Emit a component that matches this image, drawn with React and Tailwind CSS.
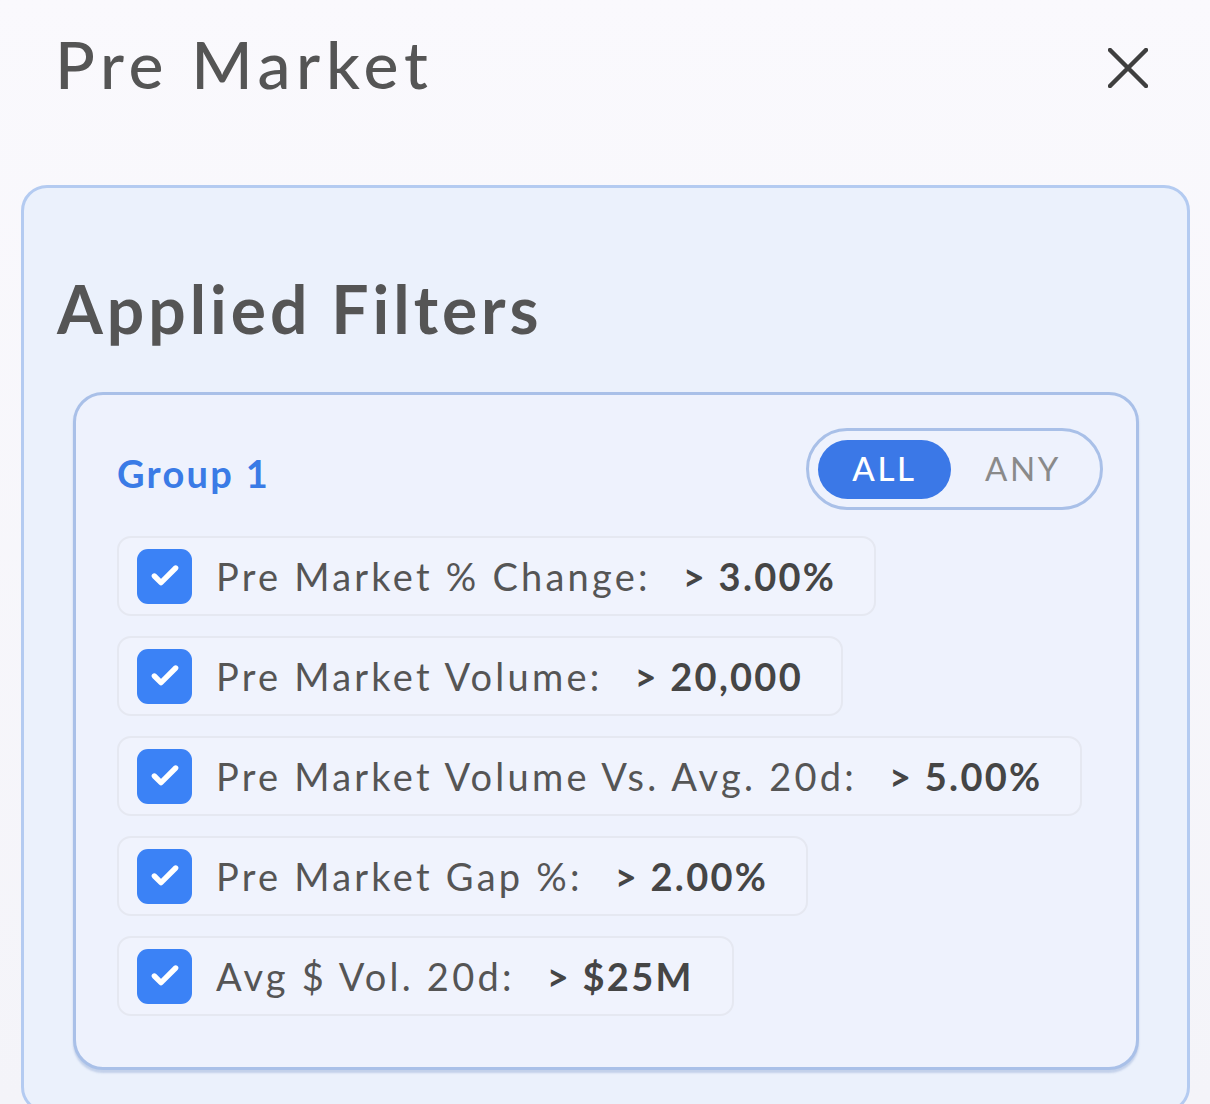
import { Check } from "lucide-react";

const filters = [
    { label: "Pre Market % Change:", value: "> 3.00%" },
    { label: "Pre Market Volume:", value: "> 20,000" },
    { label: "Pre Market Volume Vs. Avg. 20d:", value: "> 5.00%" },
    { label: "Pre Market Gap %:", value: "> 2.00%" },
    { label: "Avg $ Vol. 20d:", value: "> $25M" },
];

function FilterRow({ label, value }) {
    return (
        <div className="flex items-center h-[80px] pl-[18px] pr-[38px] rounded-[14px] border-2 border-[#e5e8f1] bg-[#f0f3fd] self-start">
            <span className="w-[55px] h-[55px] rounded-[11px] bg-[#3b82f6] flex items-center justify-center shrink-0">
                <Check size={32} strokeWidth={4} className="text-white" />
            </span>
            <span className="ml-[24px] text-[#555555] tracking-[0.085em]">{label}</span>
            <span className="ml-[32px] font-bold text-[#454545] tracking-[0.06em]">{value}</span>
        </div>
    );
}

export default function App() {
    return (
        <div
            className="h-[1104px] w-full overflow-hidden bg-gradient-to-b from-[#faf9fd] to-[#f4f4f9]"
            style={{ fontFamily: "Lato, 'Noto Sans', sans-serif" }}
        >
            {/* Header */}
            <div className="flex items-center justify-between pl-[55px] pr-[62px] h-[136px]">
                <h1 className="text-[66px] font-medium text-[#555555] tracking-[0.085em] leading-none -mt-[8px]">
                    Pre Market
                </h1>
                <svg width="40" height="40" viewBox="0 0 40 40" className="text-[#3f3f3f]">
                    <path d="M2 2 L38 38 M38 2 L2 38" stroke="currentColor" strokeWidth="4.5" strokeLinecap="round" />
                </svg>
            </div>

            {/* Applied filters card */}
            <div className="ml-[21px] mr-[20px] mt-[49px] rounded-[26px] border-[3px] border-[#b4cbf1] bg-[#ebf1fc] pl-[33px] pr-[48px] pt-[88px] pb-[40px]">
                <h2 className="text-[66px] font-bold text-[#555555] tracking-[0.06em] leading-none">
                    Applied Filters
                </h2>

                <div className="mt-[50px] ml-[16px] rounded-[30px] border-[3px] border-[#a9c0e8] bg-[#eef2fd] shadow-[0_3px_2px_rgba(120,150,200,0.35)] pl-[41px] pr-[33px] pt-[33px] pb-[51px]">
                    <div className="flex items-center justify-between">
                        <span className="text-[38px] font-bold text-[#3a7be6] tracking-[0.06em] mt-[8px]">Group 1</span>
                        <div className="flex items-center h-[82px] w-[297px] rounded-full border-[3px] border-[#a9c0e8] pl-[9px]">
                            <span className="h-[59px] w-[133px] rounded-full bg-[#3b78e7] text-white text-[33px] font-medium flex items-center justify-center tracking-[0.08em]">
                                ALL
                            </span>
                            <span className="ml-[34px] text-[33px] text-[#8a8a8a] tracking-[0.08em]">ANY</span>
                        </div>
                    </div>

                    <div className="mt-[26px] flex flex-col gap-[20px] text-[38px]">
                        {filters.map((f) => (
                            <FilterRow key={f.label} label={f.label} value={f.value} />
                        ))}
                    </div>
                </div>
            </div>
        </div>
    );
}
